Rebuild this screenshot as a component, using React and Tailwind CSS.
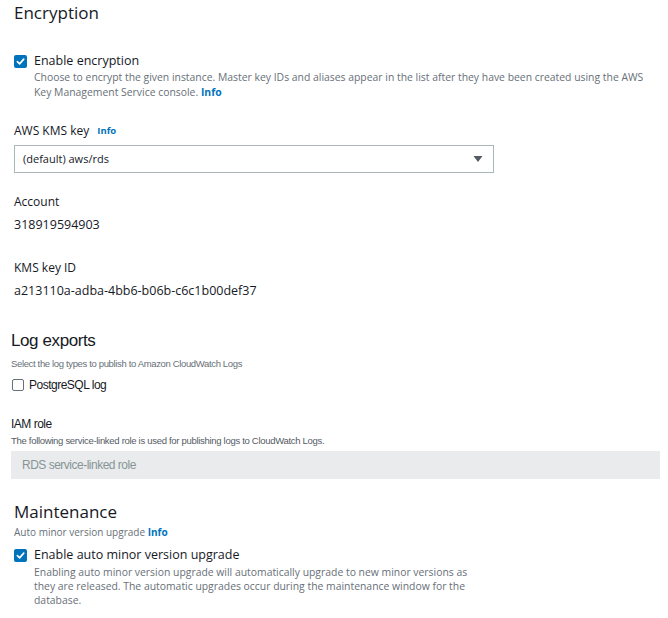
import React from 'react';

const sans = { fontFamily: '"Open Sans", "Liberation Sans", Arial, sans-serif' };
const narrow = { fontFamily: '"Liberation Sans", Arial, sans-serif' };

const Info = () => <span className="font-bold text-[#0073bb]">Info</span>;

const CheckBox = ({ checked }) =>
  checked ? (
    <span className="flex h-[13px] w-[13px] shrink-0 items-center justify-center rounded-[2px] bg-[#0073bb]">
      <svg width="9" height="9" viewBox="0 0 10 10" fill="none">
        <path d="M1.5 5.2 L4 7.6 L8.6 2.4" stroke="white" strokeWidth="1.8" strokeLinecap="round" strokeLinejoin="round" />
      </svg>
    </span>
  ) : (
    <span className="h-[12px] w-[12px] shrink-0 rounded-[2px] border border-[#687078] bg-white" />
  );

export default function App() {
  return (
    <div className="h-[618px] w-[668px] overflow-hidden bg-white text-[#16191f]" style={sans}>
      {/* Encryption */}
      <div className="pl-[14px] pt-[1px]">
        <h2 className="text-[17px] leading-[24px]">Encryption</h2>

        <div className="mt-[28px] flex items-start gap-[7px]">
          <div className="pt-[2px]"><CheckBox checked /></div>
          <div>
            <div className="text-[12.5px] leading-[16px]">Enable encryption</div>
            <p className="mt-[1px] whitespace-nowrap text-[10.4px] leading-[15px] text-[#687078]">
              Choose to encrypt the given instance. Master key IDs and aliases appear in the list after they have been created using the AWS
              <br />
              Key Management Service console. <Info />
            </p>
          </div>
        </div>

        <div className="mt-[23px] flex items-center gap-[8px] text-[12px] leading-[15px]">
          <span>AWS KMS key</span>
          <span className="text-[9.5px]"><Info /></span>
        </div>
        <div className="mt-[7px] flex h-[28px] w-[480px] items-center justify-between border border-[#aab7b8] pl-[8px] pr-[10px] text-[11px]">
          <span>(default) aws/rds</span>
          <svg width="10" height="8" viewBox="0 0 10 8">
            <path d="M0.5 1 L9.5 1 L5 7 Z" fill="#545b64" />
          </svg>
        </div>

        <div className="mt-[21px] text-[12px] leading-[15px]">Account</div>
        <div className="mt-[8px] text-[12.5px] leading-[15px]">318919594903</div>

        <div className="mt-[28px] text-[12px] leading-[15px]">KMS key ID</div>
        <div className="mt-[8px] text-[12.5px] leading-[15px]">a213110a-adba-4bb6-b06b-c6c1b00def37</div>
      </div>

      {/* Log exports */}
      <div className="pl-[11px] pr-[8px] pt-[33px]" style={narrow}>
        <h2 className="text-[17px] leading-[20px] tracking-[-0.4px]">Log exports</h2>
        <p className="mt-[6px] text-[9.5px] leading-[13px] tracking-[-0.35px] text-[#687078]">
          Select the log types to publish to Amazon CloudWatch Logs
        </p>
        <div className="mt-[7px] flex items-center gap-[5px] pl-[1px]">
          <CheckBox checked={false} />
          <span className="text-[12px] leading-[16px] tracking-[-0.5px]">PostgreSQL log</span>
        </div>

        <div className="mt-[24px] text-[12px] leading-[15px] tracking-[-0.5px]">IAM role</div>
        <p className="mt-[2px] text-[9.5px] leading-[13px] tracking-[-0.3px] text-[#545b64]">
          The following service-linked role is used for publishing logs to CloudWatch Logs.
        </p>
        <div className="mt-[4px] flex h-[28px] items-center bg-[#e9ebed] pl-[11px] text-[12px] tracking-[-0.5px] text-[#879596]">
          RDS service-linked role
        </div>
      </div>

      {/* Maintenance */}
      <div className="pl-[14px] pt-[22px]">
        <h2 className="text-[17px] leading-[22px]">Maintenance</h2>
        <p className="mt-[2px] text-[10px] leading-[14px] text-[#687078]">
          Auto minor version upgrade <Info />
        </p>
        <div className="mt-[8px] flex items-start gap-[7px]">
          <div className="pt-[2px]"><CheckBox checked /></div>
          <div>
            <div className="text-[12.5px] leading-[16px]">Enable auto minor version upgrade</div>
            <p className="mt-[2px] whitespace-nowrap text-[10.4px] leading-[14px] text-[#687078]">
              Enabling auto minor version upgrade will automatically upgrade to new minor versions as
              <br />
              they are released. The automatic upgrades occur during the maintenance window for the
              <br />
              database.
            </p>
          </div>
        </div>
      </div>
    </div>
  );
}
